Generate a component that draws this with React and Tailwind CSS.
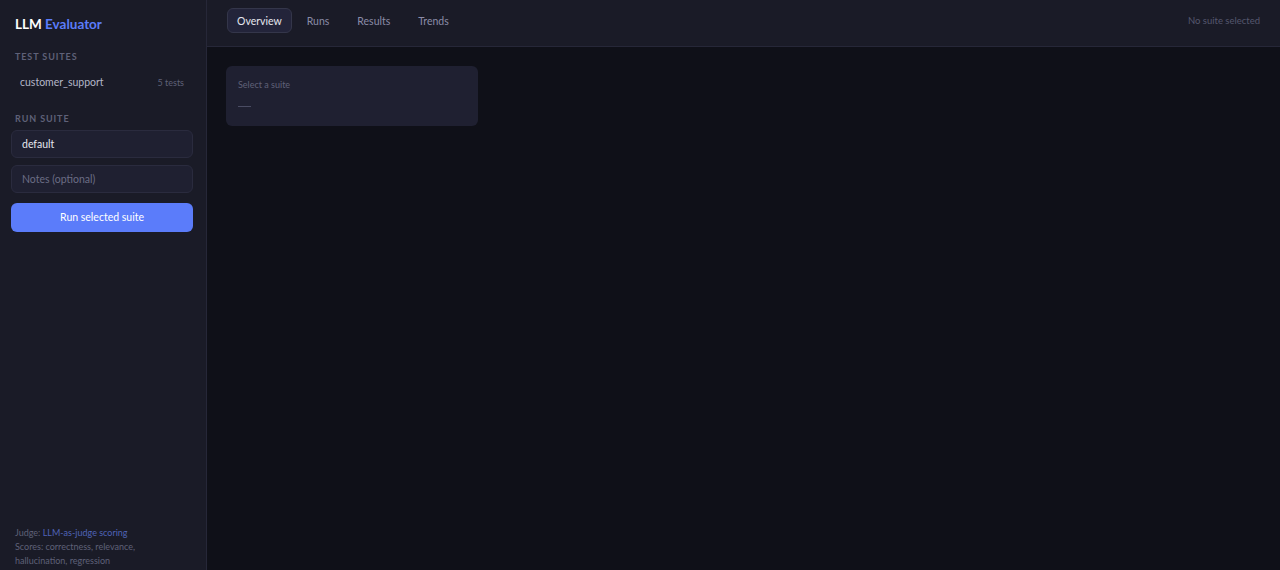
export default function App() {
  const tabs = ["Overview", "Runs", "Results", "Trends"];
  return (
    <div
      className="flex h-[570px] w-[1280px] overflow-hidden bg-[#0f1018] text-[#e6e7ef]"
      style={{ fontFamily: 'Lato, "Noto Sans", sans-serif' }}
    >
      <aside className="flex w-[207px] shrink-0 flex-col border-r border-[#262738] bg-[#1a1b27]">
        <div className="px-[15px] pt-[14px] text-[13.5px] font-bold leading-[20px]">
          <span className="text-white">LLM</span>{" "}
          <span className="text-[#5b7cfa]">Evaluator</span>
        </div>

        <div className="mt-[17px] px-[15px] text-[9px] font-bold uppercase leading-[12px] tracking-[0.1em] text-[#5f6178]">
          Test suites
        </div>
        <div className="ml-[11px] mr-[13px] mt-[7px] flex h-[26px] items-center justify-between rounded-md px-[9px]">
          <span className="text-[10.5px] text-[#b4b6c8]">customer_support</span>
          <span className="text-[9px] text-[#5f6178]">5 tests</span>
        </div>

        <div className="mt-[17px] px-[15px] text-[9px] font-bold uppercase leading-[12px] tracking-[0.1em] text-[#5f6178]">
          Run suite
        </div>
        <div className="ml-[11px] mr-[13px] mt-[5px] flex flex-col gap-[7px]">
          <div className="flex h-[28px] items-center rounded-md border border-[#2a2b3e] bg-[#1f2031] px-[10px] pt-[1px] text-[10.5px] text-[#e6e7ef]">
            default
          </div>
          <div className="flex h-[28px] items-center rounded-md border border-[#2a2b3e] bg-[#1f2031] px-[10px] pt-[1px] text-[10.5px] text-[#6b6d85]">
            Notes (optional)
          </div>
          <button className="mt-[3px] flex h-[29px] items-center justify-center rounded-md bg-[#5b7cfa] pt-[1px] text-[10.5px] text-white">
            Run selected suite
          </button>
        </div>

        <div className="mt-auto px-[15px] pb-[2px] text-[9px] leading-[14px] text-[#5f6178]">
          <div>
            Judge: <span className="text-[#4f63b8]">LLM-as-judge scoring</span>
          </div>
          <div>Scores: correctness, relevance,</div>
          <div>hallucination, regression</div>
        </div>
      </aside>

      <main className="flex flex-1 flex-col">
        <header className="flex h-[47px] shrink-0 items-start justify-between border-b border-[#262738] bg-[#1a1b27] pl-[20px] pr-[20px] pt-[8px]">
          <nav className="flex items-center gap-[2px]">
            {tabs.map((t, i) => (
              <div
                key={t}
                className={
                  i === 0
                    ? "flex h-[25px] items-center rounded-md border border-[#34364a] bg-[#23243a] px-[9px] pt-[2px] text-[10.5px] text-[#e6e7ef]"
                    : "flex h-[25px] items-center px-[13px] pt-[2px] text-[10.5px] text-[#8a8ca8]"
                }
              >
                {t}
              </div>
            ))}
          </nav>
          <div className="flex h-[25px] items-center pt-[2px] text-[9.5px] text-[#55576e]">No suite selected</div>
        </header>

        <div className="p-[19px]">
          <div className="h-[60px] w-[252px] rounded-md bg-[#1f2031] px-[12px] pt-[13px]">
            <div className="text-[9px] leading-[12px] text-[#5f6178]">Select a suite</div>
            <div className="mt-[15px] h-px w-[13px] bg-[#4a4c63]" />
          </div>
        </div>
      </main>
    </div>
  );
}
